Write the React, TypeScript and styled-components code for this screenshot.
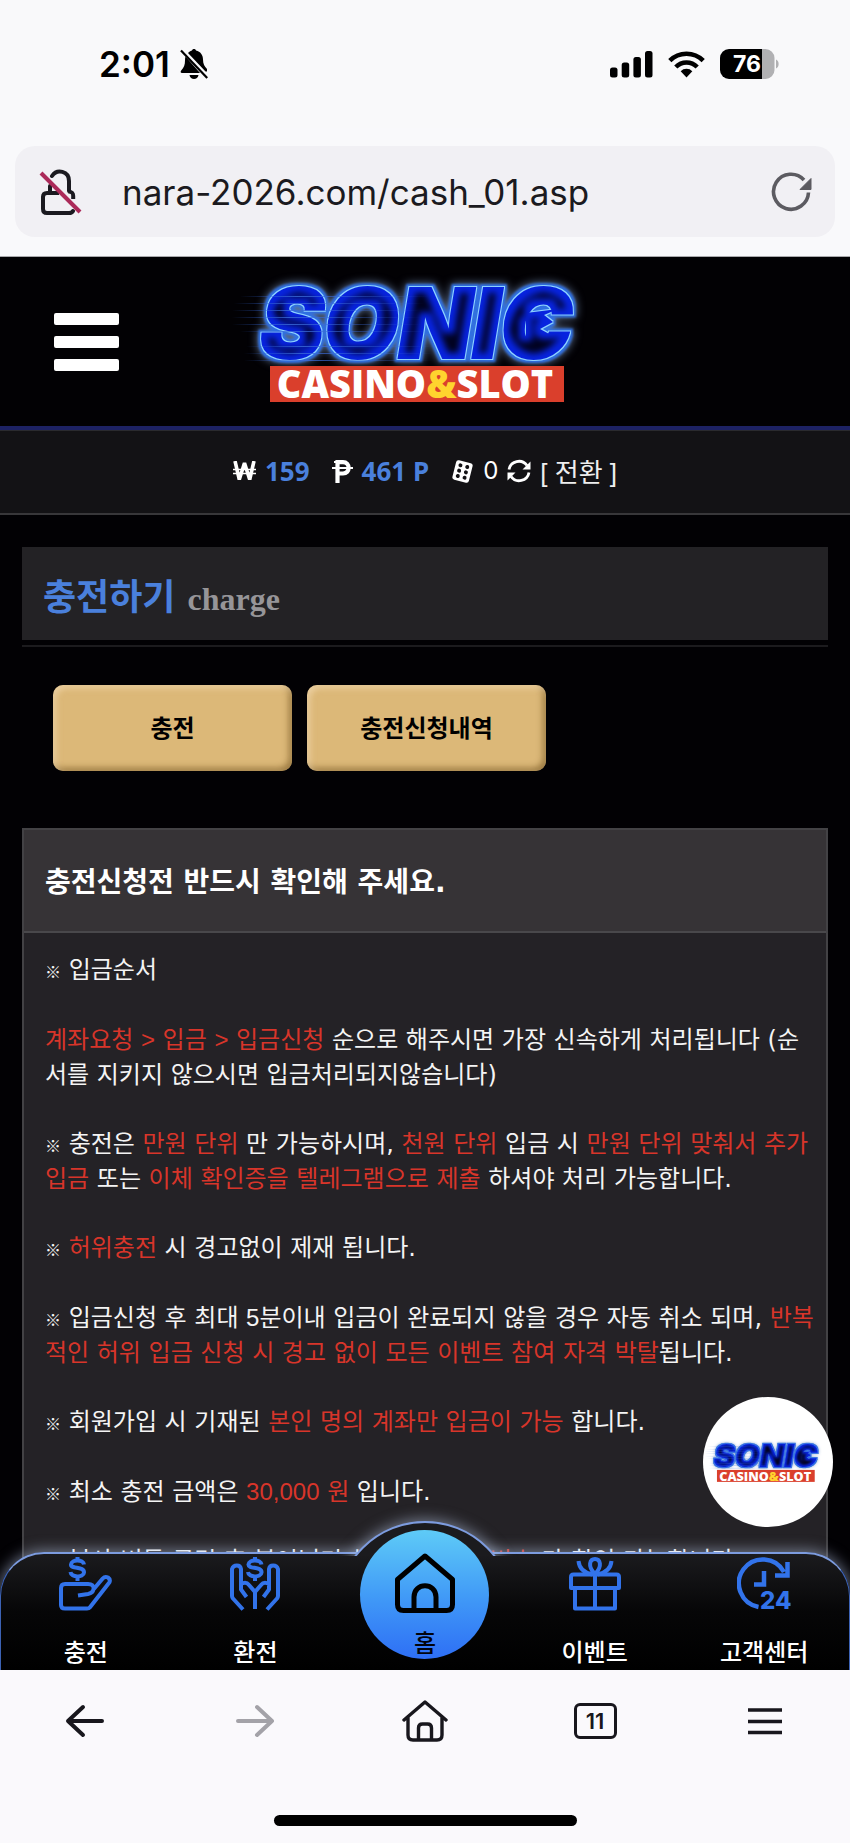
import React, { useId } from "react";
import styled, { createGlobalStyle } from "styled-components";

const GlobalStyle = createGlobalStyle`
  *, *::before, *::after { box-sizing: border-box; }
  body {
    margin: 0;
    background: #faf9fc;
    font-family: "Liberation Sans", "Noto Sans CJK KR", sans-serif;
    color: #fff;
  }
  button { font: inherit; border: 0; padding: 0; background: none; cursor: pointer; }
  a { color: inherit; text-decoration: none; }
  h1, h2, p { margin: 0; }
  svg { display: block; flex: none; }
`;

const Page = styled.div`
  display: flex;
  flex-direction: column;
  min-height: 100vh;
`;

/* ---------- phone status bar and address bar ---------- */

const StatusBar = styled.div`
  display: flex;
  align-items: center;
  justify-content: space-between;
  height: 128px;
  padding: 0 71px 0 99px;
  background: #f9f9fa;
`;

const StatusGroup = styled.div`
  display: flex;
  align-items: center;
  gap: ${(p: { $gap: number }) => p.$gap}px;
`;

const Clock = styled.time`
  font: 600 35px/40px Inter, sans-serif;
  color: #000;
`;

const AddressArea = styled.div`
  padding: 18px 15px 19px;
  background: #f9f9fb;
  border-bottom: 1px solid #a9a9ac;
`;

const AddressBar = styled.div`
  display: flex;
  align-items: center;
  height: 91px;
  padding: 0 22px 0 23px;
  border-radius: 20px;
  background: #f1f0f4;
`;

const AddressInput = styled.input`
  flex: 1;
  min-width: 0;
  margin: 0 24px 0 40px;
  padding: 0;
  border: 0;
  outline: 0;
  background: transparent;
  color: #1b1a20;
  font: 400 35px/44px Inter, sans-serif;
`;

/* ---------- site ---------- */

const Site = styled.div`
  position: relative;
  flex: 1;
  display: flex;
  flex-direction: column;
  overflow: hidden;
  background: #020104;
`;

const Header = styled.header`
  display: grid;
  grid-template-columns: 1fr auto 1fr;
  align-items: center;
  height: 173px;
  border-bottom: 4px solid #1d2264;
`;

const MenuButton = styled.button`
  display: flex;
  flex-direction: column;
  gap: 11px;
  width: 65px;
  margin-left: 54px;
`;

const MenuBar = styled.span`
  height: 12px;
  border-radius: 2px;
  background: #fff;
`;

const BalanceBar = styled.div`
  display: flex;
  align-items: center;
  justify-content: center;
  gap: 22px;
  height: 85px;
  padding-bottom: 2px;
  background: #131215;
  border-top: 1px solid #2a2a2e;
  border-bottom: 2px solid #38373a;
  font-size: 26px;
  line-height: 32px;
`;

const Balance = styled.span`
  display: flex;
  align-items: center;
  gap: ${(p: { $gap?: number }) => p.$gap ?? 9}px;
`;

const Amount = styled.strong`
  font: 700 26px/32px "Noto Sans", sans-serif;
  color: #4a80dc;
`;

const Count = styled.span`
  font: 400 24px/32px Inter, sans-serif;
`;

const Convert = styled.button`
  color: #eee;
  padding-top: 4px;
`;

const Main = styled.main`
  flex: 1;
  display: flex;
  flex-direction: column;
  padding: 32px 22px 0;
`;

const TitlePanel = styled.div`
  display: flex;
  align-items: baseline;
  gap: 12px;
  height: 93px;
  padding: 25px 21px 0;
  background: #232225;
`;

const Title = styled.h1`
  font-size: 36px;
  line-height: 52px;
  font-weight: 700;
  color: #4a80dc;
`;

const Subtitle = styled.span`
  font: 700 32px/40px "Liberation Serif", serif;
  color: #969598;
`;

const Rule = styled.hr`
  width: 100%;
  height: 2px;
  margin: 5px 0 38px;
  border: 0;
  background: #1c1b1e;
`;

const Tabs = styled.div`
  display: flex;
  gap: 15px;
  padding: 0 31px;
  margin-bottom: 57px;
`;

const TabButton = styled.button`
  width: 239px;
  height: 86px;
  padding-bottom: 4px;
  border-radius: 10px;
  background: #dcb878;
  box-shadow: inset 3px 3px 6px rgba(255, 235, 205, 0.5), inset -3px -3px 6px rgba(90, 60, 10, 0.5);
  color: #000;
  font-size: 24px;
  font-weight: 700;
`;

const Notice = styled.section`
  flex: 1;
  display: flex;
  flex-direction: column;
  border: solid #434245;
  border-width: 2px 2px 0;
  background: #242226;
  font-family: "DejaVu Sans", "Noto Sans CJK KR", sans-serif;
`;

const NoticeTitle = styled.h2`
  height: 103px;
  padding: 0 21px;
  border-bottom: 2px solid #49484b;
  background: #363336;
  font-size: 28px;
  line-height: 106px;
  font-weight: 700;
`;

const NoticeBody = styled.div`
  display: flex;
  flex-direction: column;
  gap: 34px;
  padding: 20px 0 60px 21px;
  font-size: 24px;
  line-height: 35px;
  color: #f4f4f4;
`;

const Mark = styled.span`
  font-family: "Noto Sans CJK KR", sans-serif;
  font-size: 16px;
  line-height: 16px;
  font-weight: 700;
`;

const Red = styled.span`
  color: #d8352a;
`;

const Latin = styled.span`
  font-family: "Liberation Sans", sans-serif;
`;

const FloatingButton = styled.a`
  position: absolute;
  right: 17px;
  bottom: 143px;
  display: flex;
  align-items: center;
  justify-content: center;
  width: 130px;
  height: 130px;
  border-radius: 50%;
  background: #fff;
`;

/* ---------- site tab bar, over the foot of the page ---------- */

const TabBar = styled.nav`
  position: absolute;
  left: 0;
  right: 0;
  bottom: 0;
  display: grid;
  grid-template-columns: repeat(5, 1fr);
  height: 118px;
  border: 2px solid #7d9cdf;
  border-left: 1px solid #3c62b4;
  border-right: 1px solid #3c62b4;
  border-bottom: 0;
  border-radius: 44px 44px 0 0;
  background: linear-gradient(#1b1b1e, #060607 50%, #000);
  box-shadow: 0 0 14px 2px rgba(190, 205, 235, 0.5);
`;

const HumpClip = styled.div`
  position: absolute;
  left: 50%;
  bottom: 100%;
  width: 260px;
  height: 62px;
  margin: 0 0 -2px -130px;
  overflow: hidden;
`;

const Hump = styled.div`
  width: 178px;
  height: 178px;
  margin: 27px auto 0;
  border: 2px solid #7d9cdf;
  border-radius: 50%;
  background: #1b1b1e;
  box-shadow: 0 0 14px 2px rgba(190, 205, 235, 0.5);
`;

const TabLink = styled.a`
  position: relative;
  display: flex;
  flex-direction: column;
  align-items: center;
  gap: 24px;
  padding-top: 3px;
  color: #fff;
  font-size: 24px;
  line-height: 36px;
  font-weight: 500;
`;

const HomeLink = styled(TabLink)`
  justify-self: center;
  gap: 13px;
  width: 129px;
  height: 129px;
  margin-top: -24px;
  padding-top: 23px;
  border-radius: 50%;
  background: linear-gradient(#5ecbf7, #3f97f7 55%, #2e6ff5);
  color: #02040c;
`;

/* ---------- browser toolbar ---------- */

const Toolbar = styled.div`
  display: grid;
  grid-template-columns: repeat(5, 1fr);
  justify-items: center;
  align-items: center;
  height: 101px;
  background: #faf9fc;
  color: #18171d;
`;

const ToolButton = styled.button`
  display: flex;
  align-items: center;
  justify-content: center;
  width: 56px;
  height: 56px;
  color: ${(p: { $dim?: boolean }) => (p.$dim ? "#a3a2a8" : "#18171d")};
`;

const TabCount = styled.span`
  display: flex;
  align-items: center;
  justify-content: center;
  width: 43px;
  height: 36px;
  border: 3px solid #18171d;
  border-radius: 6px;
  font: 600 22px/30px Inter, sans-serif;
`;

const HomeIndicatorArea = styled.div`
  display: flex;
  justify-content: center;
  height: 72px;
  padding-top: 44px;
  background: #faf9fc;
`;

const HomeIndicator = styled.div`
  width: 303px;
  height: 11px;
  border-radius: 6px;
  background: #000;
`;

/* ---------- drawings ---------- */

function Logo({ width, title }: { width: number; title: string }) {
  const id = useId();
  const streaks = [
    [20, 29], [14, 36], [12, 43], [12, 50], [12, 57], [20, 64], [26, 79], [24, 86], [24, 93],
  ];
  return (
    <svg width={width} viewBox="5 0 400 150" role="img" aria-label={title}>
      <defs>
        <linearGradient id={id + "s"} x1="0" y1="0" x2="1" y2="0">
          <stop offset="0" stopColor="#2c5fd0" stopOpacity="0" />
          <stop offset="0.3" stopColor="#3a6ad8" stopOpacity="0.8" />
          <stop offset="1" stopColor="#3a6ad8" stopOpacity="0" />
        </linearGradient>
        <filter id={id + "n"} filterUnits="userSpaceOnUse" x="0" y="0" width="410" height="120" colorInterpolationFilters="sRGB">
          <feMorphology in="SourceAlpha" operator="dilate" radius="3" result="wide" />
          <feGaussianBlur in="wide" stdDeviation="5" result="haze" />
          <feFlood floodColor="#7f9cc8" floodOpacity="0.8" />
          <feComposite in2="haze" operator="in" result="glow" />
          <feGaussianBlur in="wide" stdDeviation="1" result="soft" />
          <feFlood floodColor="#2f6fe2" />
          <feComposite in2="soft" operator="in" result="halo" />
          <feMorphology in="SourceAlpha" operator="dilate" radius="1" result="edge" />
          <feFlood floodColor="#8ed2ff" />
          <feComposite in2="edge" operator="in" result="line" />
          <feMorphology in="SourceAlpha" operator="erode" radius="6" result="thin" />
          <feGaussianBlur in="thin" stdDeviation="3" result="core" />
          <feFlood floodColor="#01021f" />
          <feComposite in2="core" operator="in" result="dark" />
          <feMerge>
            <feMergeNode in="glow" />
            <feMergeNode in="halo" />
            <feMergeNode in="line" />
            <feMergeNode in="SourceGraphic" />
            <feMergeNode in="dark" />
          </feMerge>
        </filter>
      </defs>
      <g aria-hidden="true">
        <g filter={`url(#${id}n)`} fill="#0824e0" stroke="#0824e0" strokeWidth="2">
          <text x="40" y="91" fontFamily="Inter, sans-serif" fontWeight="900" fontStyle="italic" fontSize="96">SONIC</text>
          <path stroke="none" d="M306 46L338 42L324 48L333 55L320 62L331 68L326 78L306 76Z" />
        </g>
        {streaks.map(([x, y]) => (
          <rect key={y} x={x} y={y} width="190" height="1" fill={`url(#${id}s)`} />
        ))}
        <rect x="50" y="99" width="294" height="36" fill="#da3f2c" />
        <text x="195" y="131" textAnchor="middle" fontFamily='"Open Sans", "Noto Sans", sans-serif' fontWeight="800" fontSize="38" fill="#fff">
          CASINO<tspan fill="#ffd42e">&amp;</tspan>SLOT
        </text>
      </g>
    </svg>
  );
}

const MutedBell = () => (
  <svg width="28" height="32" viewBox="0 0 28 32">
    <path d="M8 5C9.500 3.300 11 2.800 12 2.500C12.300 0.500 15.700 0.500 16 2.500C20.500 3.500 23 7 23 11.500C23 16 24.500 18.500 27 21L27 23.500L25.500 23.500ZM5.500 8.500L20 25H2C0.500 25 0.300 23.500 1.200 22.500C4 19.500 5 17 5 12.500C5 11 5.100 9.800 5.500 8.500Z" fill="#000" />
    <path d="M9.500 27h9c-.6 5.300-8.400 5.300-9 0Z" fill="#000" />
    <path d="M1 2.500L27.200 30" stroke="#000" strokeWidth="2.200" />
  </svg>
);

const Signal = () => (
  <svg width="43" height="27" viewBox="0 0 43 27">
    <rect x="0" y="16.500" width="7.500" height="10" rx="2.500" />
    <rect x="11.700" y="11.500" width="7.500" height="15" rx="2.500" />
    <rect x="23.400" y="6" width="7.500" height="20.500" rx="2.500" />
    <rect x="35" y="0" width="7.500" height="26.500" rx="2.500" />
  </svg>
);

const Wifi = () => (
  <svg width="37" height="27" viewBox="0 0 37 27" fill="none" stroke="#000" strokeWidth="4.500">
    <path d="M1.800 9.700a23.500 23.500 0 0 1 33.400 0" />
    <path d="M7.800 16a15 15 0 0 1 21.400 0" />
    <path d="M18.500 26.500l-5.800-6.300a8 8 0 0 1 11.600 0Z" fill="#000" stroke="none" />
  </svg>
);

const Battery = () => (
  <svg width="59" height="30" viewBox="0 0 59 30" role="img" aria-label="76%">
    <path d="M42 0h3.500a9 9 0 0 1 9 9v12a9 9 0 0 1-9 9H42Z" fill="#b1b1b3" />
    <path d="M9 0h33v30H9a9 9 0 0 1-9-9V9a9 9 0 0 1 9-9Z" fill="#000" />
    <path d="M56 10.500c3.500 1.500 3.500 7.500 0 9Z" fill="#b1b1b3" />
    <text x="27" y="23" textAnchor="middle" fontFamily="Inter, sans-serif" fontWeight="700" fontSize="23" fill="#fff">76</text>
  </svg>
);

const InsecureLock = () => (
  <svg width="44" height="46" viewBox="0 0 44 46" fill="none" stroke="#1b1a20" strokeWidth="4">
    <path d="M14 7C19 -0.500 31 2 31 12v10M12 17v6M15 24H9q-4 0-4 4v12q0 4 4 4h22q3 0 4-2" strokeLinecap="round" />
    <path d="M30.500 22.500c4 .5 4.700 1.700 4.700 4.500v3M15 24h6" />
    <path d="M3 4L42 43" stroke="#ab2a59" strokeWidth="4" />
  </svg>
);

const Reload = () => (
  <svg width="42" height="40" viewBox="0 0 42 40">
    <path d="M37.500 20.500A17.500 17.500 0 1 1 33 8" fill="none" stroke="#5c5b61" strokeWidth="3.600" />
    <path d="M40 6.500V17.500H29Z" fill="#5c5b61" stroke="#5c5b61" strokeLinejoin="round" />
  </svg>
);

const Won = () => (
  <svg width="23" height="20" viewBox="0 0 23 20" fill="none" stroke="#fff">
    <path d="M2 0L6.300 18.500L11.500 2L16.700 18.500L21 0" strokeWidth="3.600" strokeLinejoin="bevel" />
    <path d="M0 8.500h23M0 12.500h23" strokeWidth="1.600" />
  </svg>
);

const Peso = () => (
  <svg width="21" height="23" viewBox="0 0 21 23" fill="none" stroke="#fff">
    <path d="M5.500 23V2.200h5.500c7.500 0 7.500 11.300 0 11.300H5.500" strokeWidth="4.200" />
    <path d="M0 8h21M2 2h4" strokeWidth="2.200" />
  </svg>
);

const Dice = () => (
  <svg width="23" height="23" viewBox="0 0 23 23">
    <g transform="rotate(14 11.500 11.500)">
      <rect x="3" y="1.500" width="17" height="20" rx="2.500" fill="#fff" />
      {[6, 11.500, 17].map((y) => (
        <React.Fragment key={y}>
          <circle cx="8" cy={y} r="2" fill="#131215" />
          <circle cx="15" cy={y} r="2" fill="#131215" />
        </React.Fragment>
      ))}
    </g>
  </svg>
);

const Exchange = () => (
  <svg width="24" height="24" viewBox="0 0 24 24" fill="none" stroke="#fff" strokeWidth="2.800">
    <path d="M2 10.500A10 10 0 0 1 20 6.500M22 13.500A10 10 0 0 1 4 17.500" />
    <path d="M23.500 2.500v8h-8ZM.5 21.500v-8h8Z" fill="#fff" stroke="none" />
  </svg>
);

const lineIcon = {
  width: 54,
  height: 54,
  viewBox: "0 0 54 54",
  fill: "none",
  stroke: "#3273ea",
  strokeWidth: 4,
  strokeLinejoin: "round" as const,
};

const dollar = "M26 7.500C25.500 2.500 13.500 2 13 7.500C12.700 12.500 26.500 9 26 15.500C25.500 21 13 20.500 12.500 15M19.500 0v4M19.500 19v5";

const DepositIcon = () => (
  <svg {...lineIcon}>
    <path d={dollar} transform="translate(-1 0)" />
    <path d="M19 38.500l10-1.500q5-1 5.500-5q.5-5-5.500-5H6q-4 0-4 4v17q0 3.500 4 3.500h22q2 0 3-1.300L50.300 25.500q1.500-3-1.300-5q-3-1.500-5.300 1L34 33" />
  </svg>
);

const WithdrawIcon = () => (
  <svg {...lineIcon}>
    <path d={dollar} transform="translate(7.500 0)" />
    <path d="M18.500 40l-5.500-7.500V12q-.5-3.500-4.200-3.500T4 12v27q0 1.500 1 2.500l10 11M13 27q5-3 8 1l6 7v17M35.500 40l5.500-7.500V12q.5-3.500 4.200-3.500T50 12v27q0 1.500-1 2.500L39 52.500M41 27q-5-3-8 1l-6 7" />
  </svg>
);

const GiftIcon = () => (
  <svg {...lineIcon}>
    <path d="M3 31V20q0-2.500 2.500-2.500h43Q51 17.500 51 20v11ZM7 31v20.500h40V31M27 17v34" />
    <path d="M27 17C19 9 22 2 27 2S35 9 27 17M10.500 4q1 11 14 13.500M43.500 4q-1 11-14 13.500" />
  </svg>
);

const SupportIcon = () => (
  <svg {...lineIcon}>
    <path d="M21.500 50A24 24 0 1 1 47 15M50.500 5v13.500H38M27 14v13.500H17" strokeLinejoin="miter" strokeWidth="4.500" />
    <text x="23" y="52" fontFamily="Inter, sans-serif" fontWeight="800" fontSize="24" fill="#3273ea" stroke="none">24</text>
  </svg>
);

const HomeIcon = () => (
  <svg width="62" height="60" viewBox="0 0 62 60" fill="none" stroke="#000" strokeWidth="5" strokeLinejoin="round">
    <path d="M31 3L58.500 26.500V51.500q0 6-6 6H9.500q-6 0-6-6V26.500Z" />
    <path d="M20 57V44c0-15 22-15 22 0v13" />
  </svg>
);

const arrow = { width: 40, height: 34, viewBox: "0 0 40 34", fill: "none", stroke: "currentColor", strokeWidth: 4, strokeLinejoin: "round" as const, strokeLinecap: "round" as const };

const Back = () => (
  <svg {...arrow}><path d="M18 3L3 17l15 14M4 17h33" /></svg>
);

const Forward = () => (
  <svg {...arrow}><path d="M22 3l15 14l-15 14M36 17H3" /></svg>
);

const BrowserHome = () => (
  <svg width="46" height="42" viewBox="0 0 46 42" fill="none" stroke="currentColor" strokeWidth="3.400" strokeLinejoin="round" strokeLinecap="round">
    <path d="M2 20L23 2l21 18M6 17v18q0 5 5 5h24q5 0 5-5V17" />
    <path d="M16.500 39V28q0-4 4-4h5q4 0 4 4v11" />
  </svg>
);

const More = () => (
  <svg width="34" height="28" viewBox="0 0 34 28" stroke="currentColor" strokeWidth="3.600">
    <path d="M0 3h34M0 14.500h34M0 25.500h34" />
  </svg>
);

const tabs = [
  { label: "충전", icon: <DepositIcon /> },
  { label: "환전", icon: <WithdrawIcon /> },
  { label: "홈", icon: <HomeIcon />, home: true },
  { label: "이벤트", icon: <GiftIcon /> },
  { label: "고객센터", icon: <SupportIcon /> },
];

export default function App() {
  return (
    <Page>
      <GlobalStyle />
      <StatusBar>
        <StatusGroup $gap={10}>
          <Clock>2:01</Clock>
          <MutedBell />
        </StatusGroup>
        <StatusGroup $gap={15}>
          <Signal />
          <Wifi />
          <Battery />
        </StatusGroup>
      </StatusBar>
      <AddressArea>
        <AddressBar>
          <InsecureLock />
          <AddressInput aria-label="주소" defaultValue="nara-2026.com/cash_01.asp" />
          <button aria-label="새로고침"><Reload /></button>
        </AddressBar>
      </AddressArea>

      <Site>
        <Header>
          <MenuButton aria-label="메뉴">
            <MenuBar />
            <MenuBar />
            <MenuBar />
          </MenuButton>
          <a href="#main"><Logo width={400} title="SONIC CASINO&SLOT" /></a>
        </Header>
        <BalanceBar>
          <Balance><Won /><Amount>159</Amount></Balance>
          <Balance><Peso /><Amount>461 P</Amount></Balance>
          <Balance $gap={9}>
            <Dice />
            <Count>0</Count>
            <Exchange />
            <Convert>[ 전환 ]</Convert>
          </Balance>
        </BalanceBar>

        <Main id="main">
          <TitlePanel>
            <Title>충전하기</Title>
            <Subtitle>charge</Subtitle>
          </TitlePanel>
          <Rule />
          <Tabs>
            <TabButton>충전</TabButton>
            <TabButton>충전신청내역</TabButton>
          </Tabs>
          <Notice>
            <NoticeTitle>충전신청전 반드시 확인해 주세요.</NoticeTitle>
            <NoticeBody>
              <p><Mark>※</Mark> 입금순서</p>
              <p>
                <Red>계좌요청 <Latin>&gt;</Latin> 입금 <Latin>&gt;</Latin> 입금신청</Red> 순으로 해주시면 가장 신속하게 처리됩니다 (순<br />
                서를 지키지 않으시면 입금처리되지않습니다)
              </p>
              <p>
                <Mark>※</Mark> 충전은 <Red>만원 단위</Red> 만 가능하시며, <Red>천원 단위</Red> 입금 시 <Red>만원 단위 맞춰서 추가<br />
                입금</Red> 또는 <Red>이체 확인증을 텔레그램으로 제출</Red> 하셔야 처리 가능합니다.
              </p>
              <p><Mark>※</Mark> <Red>허위충전</Red> 시 경고없이 제재 됩니다.</p>
              <p>
                <Mark>※</Mark> 입금신청 후 최대 <Latin>5</Latin>분이내 입금이 완료되지 않을 경우 자동 취소 되며, <Red>반복<br />
                적인 허위 입금 신청 시 경고 없이 모든 이벤트 참여 자격 박탈</Red>됩니다.
              </p>
              <p><Mark>※</Mark> 회원가입 시 기재된 <Red>본인 명의 계좌만 입금이 가능</Red> 합니다.</p>
              <p><Mark>※</Mark> 최소 충전 금액은 <Red><Latin>30,000</Latin> 원</Red> 입니다.</p>
              <p><Mark>※</Mark> 복사 버튼 클릭 후 붙여넣기 하시면은 <Red>계좌번호</Red> 가 확인 가능합니다.</p>
            </NoticeBody>
          </Notice>
        </Main>

        <FloatingButton href="#main"><Logo width={133} title="SONIC" /></FloatingButton>

        <TabBar>
          <HumpClip><Hump /></HumpClip>
          {tabs.map(({ label, icon, home }) => {
            const Item = home ? HomeLink : TabLink;
            return (
              <Item key={label} href="#main">
                {icon}
                <span>{label}</span>
              </Item>
            );
          })}
        </TabBar>
      </Site>

      <Toolbar>
        <ToolButton aria-label="뒤로"><Back /></ToolButton>
        <ToolButton aria-label="앞으로" $dim><Forward /></ToolButton>
        <ToolButton aria-label="홈"><BrowserHome /></ToolButton>
        <ToolButton aria-label="탭"><TabCount>11</TabCount></ToolButton>
        <ToolButton aria-label="더보기"><More /></ToolButton>
      </Toolbar>
      <HomeIndicatorArea><HomeIndicator /></HomeIndicatorArea>
    </Page>
  );
}
